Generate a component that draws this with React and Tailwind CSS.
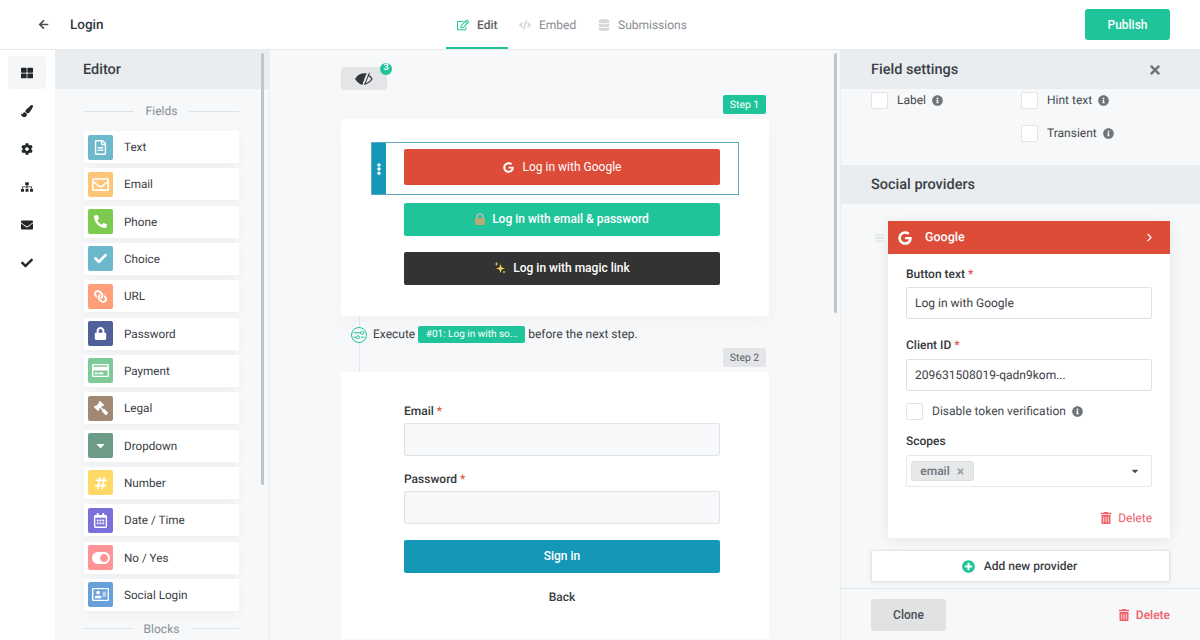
import { ChevronRight } from "lucide-react";
import {
  FaArrowLeft, FaThLarge, FaPaintBrush, FaCog, FaSitemap, FaEnvelope, FaCheck, FaRegEdit, FaCode, FaDatabase,
  FaRegFileAlt, FaRegEnvelope, FaPhone, FaLink, FaLock, FaRegCreditCard, FaGavel, FaCaretDown,
  FaHashtag, FaRegCalendarAlt, FaToggleOn, FaRegAddressCard, FaGoogle, FaEllipsisV, FaTimes, FaInfoCircle,
  FaBars, FaTrashAlt, FaPlusCircle,
} from "react-icons/fa";

const railIcons = [FaThLarge, FaPaintBrush, FaCog, FaSitemap, FaEnvelope, FaCheck];

const fields = [
  { label: "Text", icon: FaRegFileAlt, color: "bg-[#6cb8cc]", size: "text-[15px]" },
  { label: "Email", icon: FaRegEnvelope, color: "bg-[#fdc578]", size: "text-[17px]" },
  { label: "Phone", icon: FaPhone, color: "bg-[#7ccb4f]", size: "text-[13px] -scale-x-100" },
  { label: "Choice", icon: FaCheck, color: "bg-[#6cb8cc]", size: "text-[13px]" },
  { label: "URL", icon: FaLink, color: "bg-[#ff9e78]", size: "text-[13px] -scale-x-100" },
  { label: "Password", icon: FaLock, color: "bg-[#50609b]", size: "text-[13px]" },
  { label: "Payment", icon: FaRegCreditCard, color: "bg-[#7ecb98]", size: "text-[17px]" },
  { label: "Legal", icon: FaGavel, color: "bg-[#a08872]", size: "text-[14px] -scale-x-100" },
  { label: "Dropdown", icon: FaCaretDown, color: "bg-[#6c9c88]", size: "text-[13px]" },
  { label: "Number", icon: FaHashtag, color: "bg-[#ffd966]", size: "text-[14px]" },
  { label: "Date / Time", icon: FaRegCalendarAlt, color: "bg-[#7b6fdc]", size: "text-[15px]" },
  { label: "No / Yes", icon: FaToggleOn, color: "bg-[#ff9396]", size: "text-[18px]" },
  { label: "Social Login", icon: FaRegAddressCard, color: "bg-[#68a0dc]", size: "text-[17px]" },
];

function Divider({ label, className }) {
  return (
    <div className={`flex items-center gap-[12px] text-[12px] leading-[18px] text-[#8a8f94] ${className}`}>
      <div className="h-px flex-1 bg-[#dfe2e5]"></div>
      <span>{label}</span>
      <div className="h-px flex-1 bg-[#dfe2e5]"></div>
    </div>
  );
}

function Required() {
  return <span className="ml-[3px] text-[#e2503f]">*</span>;
}

function Info({ className = "" }) {
  return <FaInfoCircle className={`text-[11px] text-[#6f7478] ${className}`} />;
}

function Checkbox({ label, className = "" }) {
  return (
    <div className={`flex items-center ${className}`}>
      <div className="h-[17px] w-[17px] rounded-[2px] border border-[#e2e5e8] bg-white"></div>
      <span className="ml-[9px] text-[12px] leading-[18px] text-[#44494d]">{label}</span>
      <Info className="ml-[6px]" />
    </div>
  );
}

function Sparkles() {
  return (
    <svg width="12" height="12" viewBox="0 0 12 12" fill="#f6d657">
      <path d="M6.5 2 7.6 5.4 11 6.5 7.6 7.6 6.5 11 5.4 7.6 2 6.5 5.4 5.4Z" />
      <path d="M2.5 0 3 1.5 4.5 2 3 2.5 2.5 4 2 2.5 .5 2 2 1.500Z" />
      <path d="M10 8.500 10.400 9.600 11.500 10 10.400 10.400 10 11.500 9.600 10.400 8.500 10 9.600 9.600Z" />
    </svg>
  );
}

function LockEmoji() {
  return (
    <svg width="10" height="12" viewBox="0 0 10 12">
      <path d="M2 6V4a3 3 0 0 1 6 0v2" fill="none" stroke="#b9bcb4" strokeWidth="1.500" />
      <rect x="0" y="5" width="10" height="7" rx="1" fill="#b8ab78" />
    </svg>
  );
}

function EyeIcon() {
  return (
    <svg width="18" height="14" viewBox="0 0 18 14" fill="none" stroke="#33383c" strokeWidth="1.300">
      <path d="M1 7C3 3.800 5.800 2.200 9 2.200S15 3.800 17 7c-2 3.200-4.800 4.800-8 4.800S3 10.200 1 7Z" />
      <path d="M1 7C3 3.800 5.800 2.200 9 2.200L10.500 2 7 12C4.500 11.500 2.500 9.500 1 7Z" fill="#33383c" />
      <path d="M13 .5 8 13.500" stroke="#e3e5e7" strokeWidth="1.600" />
      <path d="M14.500 .8 9.500 13" strokeWidth="1" />
    </svg>
  );
}

function ExecuteIcon() {
  return (
    <svg width="16" height="16" viewBox="0 0 16 16" fill="none" stroke="#20c49a" strokeWidth="1">
      <circle cx="8" cy="8" r="7.500" fill="#f6f8fa" />
      <path d="M2.500 5.800H10M2.500 10.200H5.500M10 10.200H13.500M12.500 5.800H13.500" />
      <rect x="9.500" y="4.500" width="3" height="2.600" rx="1" />
      <rect x="5.500" y="8.900" width="3" height="2.600" rx="1" />
    </svg>
  );
}

function PanelHeader({ title, children, className = "" }) {
  return (
    <div className={`flex h-[39px] shrink-0 items-center justify-between bg-[#e9edf0] pr-[38px] text-[14.5px] font-medium leading-[22px] text-[#3b4045] ${className}`}>
      <span>{title}</span>
      {children}
    </div>
  );
}

function TextInput({ value, className = "" }) {
  return (
    <div className={`flex h-[32px] items-center rounded-[2px] border border-[#dfe2e5] bg-white px-[8px] text-[12px] leading-[18px] text-[#3b4045] ${className}`}>
      {value}
    </div>
  );
}

function Tab({ icon: Icon, label, active, className = "" }) {
  return (
    <div className={`flex h-[49px] items-center border-b-2 pl-[11px] pt-[2px] ${active ? "border-[#20c49a] font-medium text-[#5b6065]" : "border-transparent text-[#878c91]"} ${className}`}>
      <Icon className={`text-[12px] ${active ? "text-[#20c49a]" : "text-[#d5d8da]"}`} />
      <span className="ml-[8px] text-[12px] leading-[18px]">{label}</span>
    </div>
  );
}

export default function App() {
  return (
    <div className="flex h-screen flex-col overflow-hidden bg-white font-['Roboto',sans-serif] [text-rendering:geometricPrecision]">
      <header className="flex h-[50px] shrink-0 items-center border-b border-[#e8eaec] bg-white pr-[30px]">
        <FaArrowLeft className="ml-[38px] text-[11px] text-[#4a4f54]" />
        <span className="ml-[21px] w-[376px] text-[13.5px] font-medium leading-[20px] text-[#33383c]">Login</span>
        <div className="flex">
          <Tab icon={FaRegEdit} label="Edit" active className="w-[62px]" />
          <Tab icon={FaCode} label="Embed" className="w-[79px]" />
          <Tab icon={FaDatabase} label="Submissions" />
        </div>
        <button className="ml-auto h-[31px] w-[85px] rounded-[3px] bg-[#20c49a] text-[12px] font-medium leading-[18px] text-white">
          Publish
        </button>
      </header>

      <div className="flex min-h-0 flex-1">
        <nav className="flex w-[55px] shrink-0 flex-col items-start gap-[5px] bg-white pl-[8px] pt-[6px]">
          {railIcons.map((Icon, i) => (
            <div key={i} className={`flex h-[33px] w-[38px] items-center justify-center rounded-[4px] ${i === 0 ? "bg-[#f5f6f7]" : ""}`}>
              <Icon className="text-[12px] text-[#24282b]" />
            </div>
          ))}
        </nav>

        <aside className="relative flex w-[215px] shrink-0 flex-col overflow-hidden border-r border-[#eceef0] bg-[#f6f8fa]">
          <PanelHeader title="Editor" className="pl-[28px]" />
          <div className="pl-[29px] pr-[30px]">
            <Divider label="Fields" className="mt-[13px]" />
            <div className="mt-[11px] flex flex-col gap-[5.33px]">
              {fields.map((f) => (
                <div key={f.label} className="flex h-[32px] items-center bg-white pl-[4px] shadow-[0_4px_10px_rgba(0,0,0,0.04)]">
                  <div className={`flex h-[25px] w-[25px] items-center justify-center rounded-[2px] ${f.color}`}>
                    <f.icon className={`text-white ${f.size}`} />
                  </div>
                  <span className="ml-[11px] text-[11.7px] leading-[18px] text-[#3b4045]">{f.label}</span>
                </div>
              ))}
            </div>
            <Divider label="Blocks" className="mt-[9px]" />
          </div>
          <div className="absolute right-[5px] top-[3px] h-[432px] w-[3px] rounded-full bg-[#c2c5c8]"></div>
        </aside>

        <main className="relative min-w-0 flex-1 overflow-hidden bg-[#f6f8fa] pl-[71px] pr-[71px]">
          <div className="relative mt-[17px] flex h-[23px] w-[46px] items-center justify-center rounded-[3px] bg-[#e3e5e7]">
            <EyeIcon />
            <span className="absolute right-[-5px] top-[-4px] flex h-[12px] w-[12px] items-center justify-center rounded-full bg-[#20c49a] text-[9px] font-bold text-white">3</span>
          </div>
          <div className="mt-[5px] flex justify-end pr-[3px]">
            <span className="flex h-[19px] w-[43px] items-center justify-center rounded-[2px] bg-[#20c49a] text-[10.4px] leading-[15px] text-white">Step 1</span>
          </div>
          <section className="mt-[5px] h-[197px] bg-white pt-[23px] shadow-[0_6px_16px_rgba(0,0,0,0.03)]">
            <div className="ml-[30px] flex h-[53px] w-[368px] border border-[#5ba8bf]">
              <div className="flex w-[14px] items-center justify-center bg-[#1597b7]">
                <FaEllipsisV className="text-[12px] text-white" />
              </div>
              <button className="ml-[18px] mt-[6px] flex h-[36px] w-[316px] items-center justify-center rounded-[2px] bg-[#dd4b39] text-[12px] leading-[18px] text-white">
                <FaGoogle className="mr-[9px] text-[11px]" />
                Log in with Google
              </button>
            </div>
            <button className="ml-[63px] mt-[8px] flex h-[33px] w-[316px] items-center justify-center gap-[7px] rounded-[2px] bg-[#20c49a] pb-[1px] text-[12px] font-medium leading-[18px] text-white">
              <LockEmoji />
              Log in with email &amp; password
            </button>
            <button className="ml-[63px] mt-[16px] flex h-[33px] w-[316px] items-center justify-center gap-[7px] rounded-[2px] bg-[#333333] pb-[1px] text-[12px] font-medium leading-[18px] text-white">
              <Sparkles />
              Log in with magic link
            </button>
          </section>

          <div className="absolute left-[88.5px] top-[266px] h-[56px] w-px bg-[#e3e6e8]"></div>
          <div className="relative ml-[10px] mt-[10px] flex h-[17px] items-center text-[12px] leading-[18px] text-[#3b4045]">
            <ExecuteIcon />
            <span className="ml-[6px] pb-[1px]">Execute</span>
            <span className="mx-[3px] flex h-[17px] w-[107px] items-center justify-center rounded-[2px] bg-[#20c49a] text-[10px] leading-[15px] text-white">#01: Log in with so...</span>
            <span className="pb-[1px]">before the next step.</span>
          </div>
          <div className="mt-[5px] flex justify-end pr-[3px]">
            <span className="flex h-[19px] w-[43px] items-center justify-center rounded-[2px] bg-[#e3e5e7] text-[10.4px] leading-[15px] text-[#5b6065]">Step 2</span>
          </div>
          <section className="mt-[5px] h-[267px] bg-white pl-[63px] pr-[49px] pt-[31px]">
            <label className="block text-[12px] font-medium leading-[16px] text-[#33383c]">Email<Required /></label>
            <div className="mt-[4px] h-[33px] rounded-[2px] border border-[#e0e3e6] bg-[#f6f8fa]"></div>
            <label className="mt-[15px] block text-[12px] font-medium leading-[16px] text-[#33383c]">Password<Required /></label>
            <div className="mt-[4px] h-[33px] rounded-[2px] border border-[#e0e3e6] bg-[#f6f8fa]"></div>
            <button className="mt-[16px] h-[33px] w-full rounded-[2px] bg-[#1597b7] pb-[1px] text-[12px] font-medium leading-[18px] text-white">Sign in</button>
            <div className="mt-[15px] text-center text-[12px] font-medium leading-[18px] text-[#3b4045]">Back</div>
          </section>
          <div className="absolute right-[3px] top-[3px] h-[260px] w-[3px] rounded-full bg-[#c2c5c8]"></div>
        </main>

        <aside className="flex w-[360px] shrink-0 flex-col border-l border-[#eceef0] bg-[#f6f8fa]">
          <PanelHeader title="Field settings" className="pl-[30px]">
            <FaTimes className="text-[14px] text-[#6f7478]" />
          </PanelHeader>
          <div className="min-h-0 flex-1 overflow-hidden">
            <div className="mt-[2px] grid h-[74px] grid-cols-[150px_1fr] content-start gap-y-[15px] pl-[30px]">
              <Checkbox label="Label" />
              <Checkbox label="Hint text" />
              <div></div>
              <Checkbox label="Transient" />
            </div>
            <div className="flex h-[39px] items-center bg-[#e9edf0] pl-[30px] text-[14.5px] font-medium leading-[22px] text-[#3b4045]">Social providers</div>

            <div className="mt-[17px] flex pl-[30px] pr-[30px]">
              <FaBars className="mt-[12px] w-[17px] shrink-0 text-[10px] text-[#e0e2e4]" />
              <div className="h-[317px] flex-1 rounded-[2px] bg-white shadow-[0_2px_14px_rgba(0,0,0,0.08)]">
                <div className="flex h-[33px] items-center bg-[#dd4b39] pl-[10px] pr-[14px] text-[12.5px] font-medium leading-[18px] text-white">
                  <FaGoogle className="text-[14px]" />
                  <span className="ml-[13px] pt-[1px]">Google</span>
                  <ChevronRight size={13} strokeWidth={2} className="ml-auto" />
                </div>
                <div className="px-[18px]">
                  <label className="mt-[12px] block text-[12px] font-medium leading-[16px] text-[#33383c]">Button text<Required /></label>
                  <TextInput value="Log in with Google" className="mt-[5px]" />
                  <label className="mt-[18px] block text-[12px] font-medium leading-[16px] text-[#33383c]">Client ID<Required /></label>
                  <TextInput value="209631508019-qadn9kom..." className="mt-[6px]" />
                  <Checkbox label="Disable token verification" className="mt-[11px]" />
                  <label className="mt-[13px] block text-[12px] font-medium leading-[16px] text-[#33383c]">Scopes</label>
                  <div className="mt-[6px] flex h-[32px] items-center rounded-[2px] border border-[#e6e8ea] bg-white pl-[4px] pr-[11px]">
                    <span className="flex h-[20px] w-[63px] items-center justify-center rounded-[3px] border border-[#dcdfe1] bg-[#e6e8ea] text-[12px] font-medium leading-[18px] text-[#6f7478]">
                      email
                      <FaTimes className="ml-[6px] text-[9px] text-[#9a9ea2]" />
                    </span>
                    <FaCaretDown className="ml-auto text-[10px] text-[#4a4f54]" />
                  </div>
                  <div className="mt-[22px] flex items-center justify-end text-[12px] leading-[18px] text-[#f0606a]">
                    <FaTrashAlt className="mr-[6px] text-[12px]" />
                    Delete
                  </div>
                </div>
              </div>
            </div>

            <div className="ml-[30px] mt-[12px] flex h-[32px] w-[299px] items-center justify-center rounded-[2px] border border-[#e3e6e8] bg-white pr-[2px] text-[12px] font-medium leading-[18px] text-[#3b4045] shadow-[0_1px_4px_rgba(0,0,0,0.08)]">
              <FaPlusCircle className="mr-[9px] text-[13px] text-[#20c49a]" />
              Add new provider
            </div>
          </div>
          <div className="flex h-[52px] shrink-0 items-center justify-between border-t border-[#e3e6e8] pl-[30px] pr-[30px]">
            <button className="h-[32px] w-[75px] rounded-[3px] bg-[#e0e2e4] text-[12px] font-medium leading-[18px] text-[#4a4f54]">Clone</button>
            <div className="flex items-center text-[12px] font-medium leading-[18px] text-[#f0606a]">
              <FaTrashAlt className="mr-[6px] text-[12px]" />
              Delete
            </div>
          </div>
        </aside>
      </div>
    </div>
  );
}
